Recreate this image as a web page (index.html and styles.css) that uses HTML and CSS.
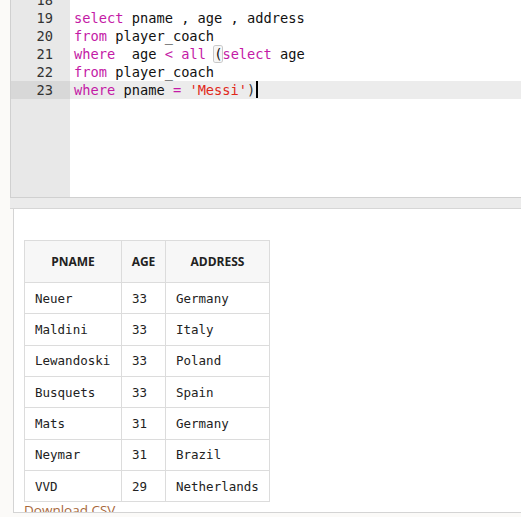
FILE: index.html
```html
<!DOCTYPE html>
<html>
<head>
<meta charset="utf-8">
<link rel="stylesheet" href="styles.css">
</head>
<body>
<div class="page">
  <div class="editor">
    <div class="lines">
      <div class="line"><span class="num">18</span><span class="code"></span></div>
      <div class="line"><span class="num">19</span><span class="code"><span class="kw">select</span> pname , age , address</span></div>
      <div class="line"><span class="num">20</span><span class="code"><span class="kw">from</span> player_coach</span></div>
      <div class="line"><span class="num">21</span><span class="code"><span class="kw">where</span>  age <span class="op">&lt;</span> <span class="kw">all</span> <span class="match">(</span><span class="kw">select</span> age</span></div>
      <div class="line"><span class="num">22</span><span class="code"><span class="kw">from</span> player_coach</span></div>
      <div class="line active"><span class="num">23</span><span class="code"><span class="kw">where</span> pname <span class="op">=</span> <span class="str">'Messi'</span><span class="paren">)</span><span class="cursor"></span></span></div>
      <div class="filler"><span class="num"></span><span class="code"></span></div>
    </div>
  </div>
  <div class="splitter"></div>
  <div class="results">
    <table class="grid">
      <thead>
        <tr><th class="c1">PNAME</th><th class="c2">AGE</th><th class="c3">ADDRESS</th></tr>
      </thead>
      <tbody>
        <tr><td>Neuer</td><td>33</td><td>Germany</td></tr>
        <tr><td>Maldini</td><td>33</td><td>Italy</td></tr>
        <tr><td>Lewandoski</td><td>33</td><td>Poland</td></tr>
        <tr><td>Busquets</td><td>33</td><td>Spain</td></tr>
        <tr><td>Mats</td><td>31</td><td>Germany</td></tr>
        <tr><td>Neymar</td><td>31</td><td>Brazil</td></tr>
        <tr><td>VVD</td><td>29</td><td>Netherlands</td></tr>
      </tbody>
    </table>
    <a class="csv">Download CSV</a>
  </div>
</div>
</body>
</html>
```
FILE: styles.css
```css
html, body {
  margin: 0;
  padding: 0;
  background: #fbfaf8;
  overflow: hidden;
}
.page {
  width: 521px;
  height: 517px;
  display: flex;
  flex-direction: column;
}
.editor {
  margin-left: 10px;
  height: 197px;
  border-left: 1px solid #d0d0d0;
  border-bottom: 1px solid #d0d0d0;
  background: #fff;
  overflow: hidden;
  flex: none;
}
.lines {
  margin-top: -9px;
  display: flex;
  flex-direction: column;
  height: 215px;
  font-family: "DejaVu Sans Mono", monospace;
  font-size: 13.7px;
}
.line {
  display: flex;
  height: 18px;
  line-height: 18px;
}
.filler {
  display: flex;
  flex: 1;
}
.num {
  width: 42px;
  padding-right: 17px;
  text-align: right;
  background: #e8e8e8;
  color: #333;
  flex: none;
}
.code {
  display: block;
  padding-left: 4px;
  color: #111;
  white-space: pre;
  flex: 1;
}
.active .num { background: #d8d8d8; }
.active .code { background: #ececec; }
.kw { color: #c41aa6; }
.op { color: #c41aa6; }
.str { color: #e0281a; }
.paren { color: #333; }
.match {
  box-shadow: 0 0 0 1px #c8c8c8;
  border-radius: 2px;
  background: #f6f6f6;
}
.cursor {
  display: inline-block;
  width: 2px;
  height: 17px;
  background: #000;
  margin-left: 1px;
  vertical-align: top;
}
.splitter {
  margin-left: 10px;
  height: 10px;
  background: #ebebeb;
  border-bottom: 1px solid #d6d6d6;
  flex: none;
}
.results {
  margin-left: 13px;
  height: 304px;
  border-left: 1px solid #d4d4d4;
  border-bottom: 1px solid #d4d4d4;
  background: #fff;
  padding: 31px 0 0 10px;
  overflow: hidden;
  flex: none;
  box-sizing: border-box;
}
.grid {
  border-collapse: collapse;
}
.grid th {
  font-family: "Open Sans", sans-serif;
  font-weight: 700;
  font-size: 12px;
  color: #222;
  background: #f7f7f7;
  height: 41px;
  padding: 0;
  border: 1px solid #dcdcdc;
  text-align: center;
}
.c1 { width: 96px; }
.c2 { width: 43px; }
.c3 { width: 103px; }
.grid td {
  font-family: "DejaVu Sans Mono", monospace;
  font-size: 12.5px;
  color: #222;
  height: 31.33px;
  padding: 0 10px;
  border: 1px solid #dcdcdc;
  text-align: left;
  box-sizing: border-box;
}
.csv {
  display: block;
  font-family: "Open Sans", sans-serif;
  font-size: 13.5px;
  color: #a8683a;
  line-height: 16px;
  margin-top: 0;
}
```
